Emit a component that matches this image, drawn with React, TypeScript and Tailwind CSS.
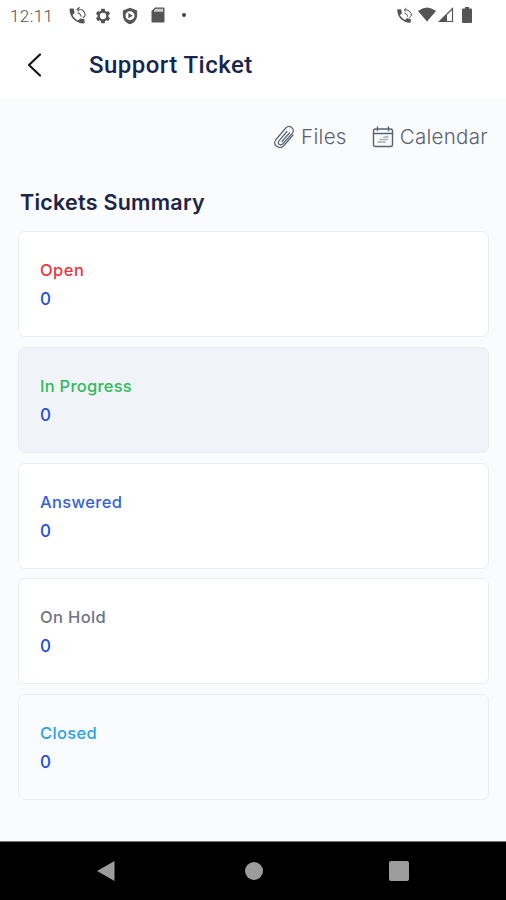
const HANDSET =
  "M6.62 10.79c1.44 2.83 3.76 5.14 6.59 6.59l2.2-2.2c.27-.27.67-.36 1.02-.24 1.12.37 2.33.57 3.57.57.55 0 1 .45 1 1V20c0 .55-.45 1-1 1C10.61 21 3 13.39 3 4c0-.55.45-1 1-1h3.5c.55 0 1 .45 1 1 0 1.25.2 2.45.57 3.57.11.35.03.74-.25 1.02l-2.2 2.2z";
const GEAR =
  "M19.14 12.94c.04-.3.06-.61.06-.94s-.02-.64-.07-.94l2.03-1.58c.18-.14.23-.41.12-.61l-1.92-3.32c-.12-.22-.37-.29-.59-.22l-2.39.96c-.5-.38-1.03-.7-1.62-.94l-.36-2.54c-.04-.24-.24-.41-.48-.41h-3.84c-.24 0-.43.17-.47.41l-.36 2.54c-.59.24-1.13.57-1.62.94l-2.39-.96c-.22-.08-.47 0-.59.22L2.74 8.87c-.12.21-.08.47.12.61l2.03 1.58c-.05.3-.09.63-.09.94s.02.64.07.94l-2.03 1.58c-.18.14-.23.41-.12.61l1.92 3.32c.12.22.37.29.59.22l2.39-.96c.5.38 1.03.7 1.62.94l.36 2.54c.05.24.24.41.48.41h3.84c.24 0 .44-.17.47-.41l.36-2.54c.59-.24 1.13-.56 1.62-.94l2.39.96c.22.08.47 0 .59-.22l1.92-3.32c.12-.22.07-.47-.12-.61l-2.01-1.58zM12 16.2A4.2 4.2 0 1 1 12 7.800a4.200 4.200 0 0 1 0 8.400z";

function PhoneSync({ className }: { className: string }) {
  return (
    <svg viewBox="0 0 24 24" className={className}>
      <path d={HANDSET} fill="currentColor" />
      <path
        d="M12.500 3.800A8 8 0 0 1 22 11.500M19 14.200a7 7 0 0 0 2.800-3.200M12.500 8A5.500 5.500 0 0 1 17 13M15 1.500l-2.800 2.300 2.500 2.500"
        fill="none"
        stroke="currentColor"
        strokeWidth="1.300"
      />
    </svg>
  );
}

function StatusBar() {
  return (
    <div className="flex h-8 shrink-0 items-start bg-white pt-[7px] pl-[10px] text-[#555]">
      <span className="mt-px w-[58px] font-['Roboto',sans-serif] text-[17px] leading-4 font-light tracking-[0.4px] text-[#505050]">12:11</span>
      <PhoneSync className="-mt-px -ml-px size-[20px]" />
      <svg viewBox="0 0 24 24" className="ml-[7px] size-[18px]"><path d={GEAR} fill="currentColor" fillRule="evenodd" /></svg>
      <svg viewBox="0 0 24 24" className="ml-[9px] size-[18px]">
        <path fillRule="evenodd" fill="currentColor" d="M12 1 2.500 4.500V11c0 5.500 4 10.700 9.500 12 5.500-1.300 9.500-6.500 9.500-12V4.500L12 1zm0 4.500a6 6 0 1 1 0 12 6 6 0 0 1 0-12zM9.800 8v7l6-3.500z" />
      </svg>
      <svg viewBox="0 0 14 16" className="ml-[12px] h-4 w-[14px]">
        <path d="M4 .5h8.500q1 0 1 1v13q0 1-1 1h-11q-1 0-1-1V4z" fill="currentColor" />
        <path d="M4.500 1.800h7.700v3H3v-1.500z" fill="#ccc" />
      </svg>
      <span className="mt-[6px] ml-[17px] size-1 rounded-full bg-[#444]" />
      <PhoneSync className="ml-[209px] size-[18px]" />
      <svg viewBox="0 0 18 15" className="ml-[5px] h-[15px] w-[18px]"><path d="M0 4Q9-3 18 4L9 14.500z" fill="currentColor" /></svg>
      <svg viewBox="0 0 16 16" className="ml-[2px] size-4">
        <path d="M1.500 14.500 14.500 1.500v13z" fill="none" stroke="currentColor" strokeWidth="1.200" />
        <path d="M.5 15 9 7v8z" fill="currentColor" />
      </svg>
      <svg viewBox="0 0 10 16" className="ml-[8px] h-4 w-[10px]"><path d="M3 0h4v1.500h2q1 0 1 1V15q0 1-1 1H1q-1 0-1-1V2.500q0-1 1-1h2z" fill="currentColor" /></svg>
    </div>
  );
}

const tickets = [
  { label: "Open", count: 0, text: "text-[#ef3340] tracking-[0.45px]", card: "bg-white" },
  { label: "In Progress", count: 0, text: "text-[#2fba5c] tracking-[0.25px]", card: "bg-[#f0f4f8]" },
  { label: "Answered", count: 0, text: "text-[#3562dc] tracking-[0.35px]", card: "bg-white" },
  { label: "On Hold", count: 0, text: "text-[#6b7488] tracking-[0.35px]", card: "bg-white" },
  { label: "Closed", count: 0, text: "text-[#2ba3e3] tracking-[0.35px]", card: "bg-[#fafbfd]" },
];

export default function App() {
  return (
    <div className="flex h-[900px] w-[506px] flex-col overflow-hidden bg-[#f9fbfd] font-['Inter',sans-serif]">
      <StatusBar />
      <header className="flex h-[67px] shrink-0 items-center bg-white pb-[2px] pl-[27px]">
        <svg viewBox="0 0 16 24" className="h-6 w-4" fill="none" stroke="#171717" strokeWidth="2.200" strokeLinecap="round" strokeLinejoin="round">
          <path d="M13 1.500 2 12l11 10.500" />
        </svg>
        <h1 className="mt-px ml-[46px] font-['Roboto',sans-serif] text-[24px] leading-7 font-medium tracking-[0.45px] text-[#17264f]">Support Ticket</h1>
      </header>
      <main className="flex-1 px-[18px]">
        <div className="flex h-[75px] items-center justify-end text-[#596174]">
          <svg viewBox="0 0 22 24" className="h-6 w-[22px]" fill="none" stroke="currentColor" strokeWidth="1.200" strokeLinecap="round" strokeLinejoin="round">
            <path d="M20 10 11 20.500c-5 5-12-.8-8-6L12.800 3c3.700-3.700 9.700.8 6.500 5.300L9.700 19c-2.500 2.300-5.800-.5-3.700-3.200L14 6.500M9 16.500l7.500-8.500" />
          </svg>
          <span className="mt-px ml-[6px] text-[20.500px] font-[350] tracking-[0.3px]">Files</span>
          <svg viewBox="0 0 22 22" className="ml-[25px] size-[22px]" fill="none" stroke="currentColor" strokeWidth="1.400" strokeLinecap="round">
            <rect x="1.500" y="3" width="19" height="17.500" rx="2" />
            <path d="M1.500 7.500h19M5.500 1v3.500M16.500 1v3.500" />
            <path d="M12 11h4M8 13.500h7M6 16h7" strokeWidth="1.700" opacity=".5" />
          </svg>
          <span className="mt-px ml-[6px] text-[20.500px] font-[350] tracking-[0.3px]">Calendar</span>
        </div>
        <h2 className="mt-[14px] ml-[2px] text-[21.500px] leading-7 font-semibold tracking-[0.25px] text-[#1c2545]">Tickets Summary</h2>
        <div className="mt-[15.400px] flex flex-col gap-[9.700px]">
          {tickets.map((t) => (
            <section key={t.label} className={`flex h-[106px] w-[471px] flex-col rounded-[7px] border-[1.500px] border-[#e9eef1] pt-[26px] pl-[21px] ${t.card}`}>
              <span className={`text-[16.500px] leading-6 font-medium ${t.text}`}>{t.label}</span>
              <span className="mt-[5px] text-[17px] leading-6 font-medium text-[#2450d8]">{t.count}</span>
            </section>
          ))}
        </div>
      </main>
      <nav className="flex h-[59px] shrink-0 items-center border-t border-[#777] bg-black pl-[96px]">
        <svg viewBox="0 0 20 22" className="h-[22px] w-5"><path d="M1 11 18.500 1v20z" fill="#9c9c9c" /></svg>
        <span className="ml-[129px] size-[18px] rounded-full bg-[#9c9c9c]" />
        <span className="ml-[126px] size-5 rounded-[2px] bg-[#9c9c9c]" />
      </nav>
    </div>
  );
}
